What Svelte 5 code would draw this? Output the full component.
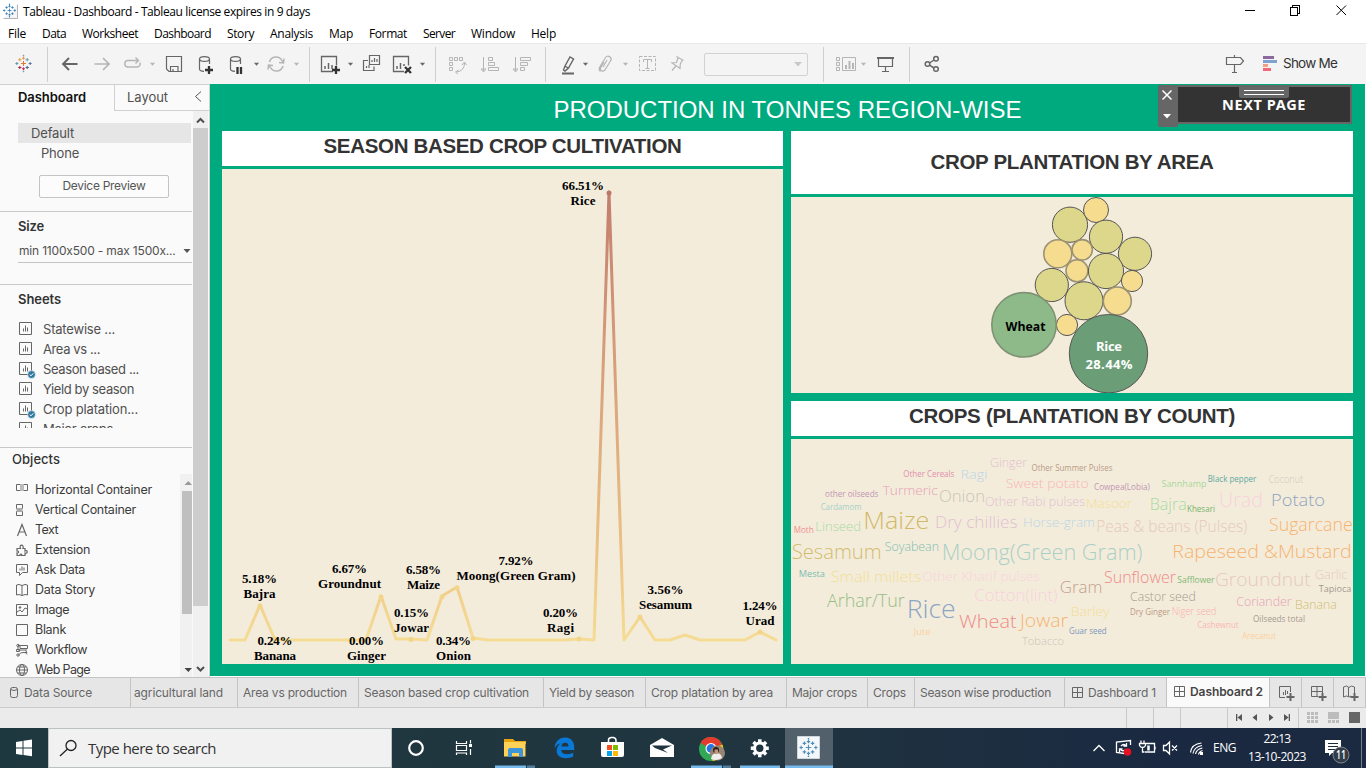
<script>
  // Spreads the letters of a label so that it fills the given width.
  function fit(node, width) {
    const natural = node.getBoundingClientRect().width;
    node.style.letterSpacing = (width - natural) / node.textContent.length + 'px';
    node.style.width = width + 'px';
  }

  const menus = [
    ['File', 18], ['Data', 24], ['Worksheet', 56], ['Dashboard', 57], ['Story', 27], ['Analysis', 43],
    ['Map', 24], ['Format', 38], ['Server', 32], ['Window', 44], ['Help', 25]
  ];
  const sheets = [
    ['Statewise ...', 72, false], ['Area vs ...', 57, false], ['Season based ...', 96, true],
    ['Yield by season', 91, false], ['Crop platation...', 95, true], ['Major crops', 70, false]
  ];
  const objects = [
    ['Horizontal Container', 117, 'h'], ['Vertical Container', 101, 'v'], ['Text', 23, 't'], ['Extension', 55, 'e'],
    ['Ask Data', 50, 'a'], ['Data Story', 60, 's'], ['Image', 34, 'i'], ['Blank', 31, 'b'], ['Workflow', 52, 'w'], ['Web Page', 55, 'g']
  ];
  const tabs = [
    ['agricultural land', 107, 89, 3], ['Area vs production', 121, 104, 5], ['Season based crop cultivation', 185, 165, 5],
    ['Yield by season', 102, 85, 5], ['Crop platation by area', 141, 122, 5], ['Major crops', 81, 65, 5],
    ['Crops', 47, 33, 5], ['Season wise production', 150, 131, 5]
  ];
  const bubbles = [
    [1070, 224.7, 17.6, 'm'], [1096, 210, 12.5, 's'], [1106, 236.7, 16.6, 'm'], [1135, 253.8, 16.6, 'm'],
    [1057.8, 253.8, 14, 's g'], [1082.2, 249.8, 10.2, 's g'], [1077, 270.8, 11, 's g'], [1106, 271, 17.6, 'm'],
    [1132, 281, 10.6, 's'], [1051.8, 285, 16.6, 'm'], [1084, 300.8, 19, 'm'], [1117.3, 301, 14, 's g'],
    [1067, 325, 10.6, 's'], [1024, 324.8, 32.2, 'l g'], [1108.5, 353.7, 39.2, 'x']
  ];
  const line = '230,640 245,640 260,605 275,640 366,640 381,596 396,639 411,639 427,640 442,596 457,587 473,638 488,640 564,640 579,639 594,640 609,192 624,640 640,617 655,640 670,640 685,635 700,640 745,640 760,632 776,640';
  const points = [
    ['5.18%', 'Bajra', 259.5, 583, 35, 32], ['0.24%', 'Banana', 275, 645, 35, 42], ['6.67%', 'Groundnut', 349.5, 573, 35, 63],
    ['0.00%', 'Ginger', 366.5, 645, 35, 39], ['6.58%', 'Maize', 423.5, 574, 35, 33], ['0.15%', 'Jowar', 411.5, 617, 35, 35],
    ['0.34%', 'Onion', 453.5, 645, 35, 35], ['7.92%', 'Moong(Green Gram)', 516, 565, 35, 119], ['0.20%', 'Ragi', 560.5, 617, 35, 27],
    ['66.51%', 'Rice', 583, 190, 42, 25], ['3.56%', 'Sesamum', 665.5, 594, 36, 53], ['1.24%', 'Urad', 760, 610, 35, 29]
  ];
  const words = [
    ['Ginger', 990, 467, 37, 12, '#dfbfd2'], ['Other Summer Pulses', 1031.5, 471, 81, 8.5, '#b99a85'],
    ['Other Cereals', 903.3, 477, 51, 8.5, '#e08fac'], ['Ragi', 960.5, 479, 27, 13, '#b9d6e6'],
    ['Sweet potato', 1005.7, 488, 83, 13, '#f8b6b4'], ['Cowpea(Lobia)', 1094, 490, 56, 8.5, '#c295b4'],
    ['Sannhamp', 1161.5, 487, 45, 9.5, '#a5d99b'], ['Black pepper', 1207.7, 482, 48.7, 8.5, '#62aaa3'],
    ['Coconut', 1268.7, 483, 34.5, 10, '#cfc7bc'], ['other oilseeds', 825, 497, 53.5, 8.5, '#c295b4'],
    ['Turmeric', 882.7, 495, 55, 13, '#e4a0b6'], ['Onion', 939, 502, 46, 17, '#cbc3b8'],
    ['Other Rabi pulses', 985, 506, 100, 12.5, '#dfbfd2'], ['Masoor', 1086, 508, 46, 13, '#f2dd93'],
    ['Bajra', 1149.7, 510, 37, 16, '#a7dba0'], ['Khesari', 1187, 512, 28, 8.5, '#78b36d'],
    ['Urad', 1219, 507, 44, 20, '#f8d2db'], ['Potato', 1271, 506, 54, 17, '#8ea4bf'],
    ['Cardamom', 820.7, 510, 40.7, 8.5, '#a5d0c9'], ['Maize', 863.3, 529, 66, 24, '#d0b968'],
    ['Moth', 793.7, 533, 20, 8.5, '#ee9090'], ['Linseed', 815.3, 531, 45.7, 12.5, '#a7dba0'],
    ['Dry chillies', 935, 528, 82.5, 16, '#dfbfd2'], ['Horse-gram', 1023, 527, 72, 13, '#b9d6e6'],
    ['Peas & beans (Pulses)', 1096.3, 532, 151, 15.5, '#e5c9bc'], ['Sugarcane', 1269, 531, 83.7, 17.5, '#f6b36f'],
    ['Sesamum', 791.7, 559, 90, 19.5, '#d0bc70'], ['Soyabean', 884.7, 551, 54.3, 12, '#7dbcb0'],
    ['Moong(Green Gram)', 941.7, 560, 200.7, 22, '#a9d0c5'], ['Rapeseed &Mustard', 1172.3, 558, 179.3, 19, '#f6b36f'],
    ['Mesta', 798.7, 577, 26.3, 9.5, '#7dbcb0'], ['Small millets', 830.7, 582, 90.7, 15, '#f2dd93'],
    ['Other Kharif pulses', 922.3, 581, 117.3, 13, '#f8d2db'], ['Gram', 1059.7, 593, 42.7, 17, '#c2a08c'],
    ['Sunflower', 1104, 583, 72, 16, '#ee8a88'], ['Safflower', 1177.3, 583, 37.3, 8.5, '#7fb874'],
    ['Groundnut', 1215, 586, 95.7, 19, '#e5c9bc'], ['Garlic', 1315, 579, 32.3, 12, '#e5c9bc'],
    ['Tapioca', 1318.7, 592, 32.7, 9.5, '#a49a90'], ['Arhar/Tur', 827, 607, 77.7, 17.5, '#96bd85'],
    ['Rice', 906.7, 618, 49, 25, '#8ba5c5'], ['Cotton(lint)', 974.3, 601, 83.3, 16, '#f8d2db'],
    ['Castor seed', 1130, 601, 65.7, 12.5, '#a49a90'], ['Wheat', 959, 627.5, 57.7, 19, '#ee8a88'],
    ['Jowar', 1020, 627, 48, 17.5, '#f6b36f'], ['Barley', 1070.7, 616, 38.7, 13, '#f2dd93'],
    ['Dry Ginger', 1130, 615, 40, 8.5, '#b99a85'], ['Niger seed', 1171.7, 615, 44.7, 10, '#f8aea9'],
    ['Coriander', 1236.3, 606, 55.3, 12.5, '#e4a0b6'], ['Banana', 1295, 609, 41.7, 12.5, '#d0bc70'],
    ['Oilseeds total', 1253, 622, 52, 8.5, '#a49a90'], ['Cashewnut', 1197.3, 628, 41.3, 8.5, '#f8b6b4'],
    ['Arecanut', 1242, 638.5, 34, 8.5, '#fbd0a0'], ['Guar seed', 1069, 634, 37.7, 8.5, '#7b97bb'],
    ['Tobacco', 1022, 645, 42, 11, '#cbc3b8'], ['Jute', 913.7, 635, 16.7, 8.5, '#fbd0a0']
  ];
  // Logo crosses: x, y, arm length, colour
  const crosses = [
    [0, 0, 2.6, '#e8762d'], [0, -5.6, 1.6, '#eb9a4e'], [0, 5.6, 1.6, '#c8334a'], [-7, 0, 1.6, '#5f9aa8'], [7, 0, 1.6, '#59789a'],
    [-3.9, -4, 1.7, '#e8a04e'], [3.9, -4, 1.7, '#6aa1ae'], [-3.9, 4.2, 1.7, '#b02a45'], [3.9, 4.2, 1.7, '#47629c'],
    [0, -8.300, .8, '#8a9bb5'], [0, 8.300, .8, '#8a9bb5']
  ];
</script>

{#snippet logo(cx, cy, s, mono)}
  <g transform="translate({cx} {cy}) scale({s})">
    {#each crosses as c}
      <path d="M{c[0] - c[2]} {c[1]}h{c[2] * 2}M{c[0]} {c[1] - c[2]}v{c[2] * 2}" style:stroke={mono || c[3]} stroke-width="1.1" />
    {/each}
  </g>
{/snippet}

{#snippet arrow(x, y)}
  <path class="solid" d="M{x - 2.6} {y - 1.3}h5.2l-2.6 3z" />
{/snippet}

<div class="app">
  <header class="titlebar">
    <svg width="23" height="23" viewBox="0 0 23 23"><path d="M3.5 18.5h14v-14" stroke="#b5b5b5" fill="#f5f5f5" />{@render logo(9.5, 10.5, 0.75, '#357fb5')}</svg>
    <span class="apptitle" use:fit={287}>Tableau - Dashboard - Tableau license expires in 9 days</span>
    <svg class="winbtns" width="136" height="23" viewBox="1230 0 136 23" shape-rendering="crispEdges" stroke="#000">
      <path d="M1245 10.5h10M1290.5 7.5h7v8h-7zM1292.5 7v-2h7v8h-2" />
      <path shape-rendering="auto" d="M1336.500 5.500l9.500 9.500M1346 5.500l-9.500 9.500" />
    </svg>
  </header>
  <nav class="menu">
    {#each menus as m}<span use:fit={m[1]}>{m[0]}</span>{/each}
  </nav>

  <div class="toolbar">
    <svg width="47" height="40" viewBox="0 44 47 40">{@render logo(23.5, 63.5, 0.95, null)}</svg>
    <i></i>
    <svg width="261" height="40" viewBox="48 44 261 40">
      <path stroke-width="1.9" d="M77.500 64H63.500M69 58l-6 6 6 6" />
      <g class="dim">
        <path stroke-width="1.7" d="M94.500 64h14M103 58l6 6-6 6" />
        <path stroke-width="1.400" d="M132 60.500h-4.500a3.300 3.300 0 0 0 0 6.500h9.500a3.300 3.300 0 0 0 3-4.500M132 60.500h6M135.500 57.500l3 3-3 3" />
        {@render arrow(152.500, 64)}
        <path stroke-width="1.500" d="M269.500 62a6.800 6.800 0 0 1 12.500-1.500l1.500 2M283 66a6.800 6.800 0 0 1-12.500 1.500l-1.500-2M284 58.500l-.5 4.500-4.500-.5M268 69.500l.5-4.500 4.500.5" />
        {@render arrow(296.500, 64)}
      </g>
      <path stroke-width="1.200" d="M166.500 56.500h15v15h-12.500l-2.500-2.500zM170.500 71v-4.500h7.500v4.500M173 69v2" />
      <ellipse stroke-width="1.200" cx="204.500" cy="59" rx="5" ry="2.400" />
      <path stroke-width="1.200" d="M199.500 59v10c0 1.300 2 2.200 4.500 2.400M209.500 59v5" /><path class="bold" d="M209 66v8M205 70h8" />
      <ellipse stroke-width="1.200" cx="235.500" cy="59" rx="5" ry="2.400" />
      <path stroke-width="1.200" d="M230.500 59v10c0 1.300 2 2.200 4.500 2.400M240.500 59v5" /><path class="bold" d="M237.500 67v7M241 67v7" />
      {@render arrow(256.500, 64)}
    </svg>
    <i></i>
    <svg width="125" height="40" viewBox="310 44 125 40">
      <path stroke-width="1.300" d="M333 71.500h-11.500v-15h15v9" /><path stroke-width="1.500" d="M325 69v-3M328.500 69v-6M332 69v-4" />
      <path class="bold" d="M336 66v8M332 70h8" />{@render arrow(350.500, 64)}
      <path stroke-width="1.200" d="M369.500 60.500v-5h10v9h-10zM368 60.500h-4.500v10h10.500v-4M366.500 68v-2M369 68v-3M372 62v-2M374.500 62v-4M377 62v-3" />
      <path stroke-width="1.300" d="M404 71.500h-10.500v-15h15v9" /><path stroke-width="1.500" d="M397 69v-3M400.500 69v-6M404 66v-2" />
      <path class="bold" d="M405 67l6 6M411 67l-6 6" />{@render arrow(422.500, 64)}
    </svg>
    <i></i>
    <svg width="109" height="40" viewBox="436 44 109 40" class="dim">
      <path d="M449.500 57.500h3v3h-3zM454.500 57.500h3v3h-3zM459.500 57.500h3v3h-3zM449.500 62.500h3v3h-3zM449.500 67.500h3v3h-3zM464.500 63q0 8-8 9M462 65l2.500-3 2 3M458.500 70l-3 2 2.500 2" />
      <path d="M483.500 57v14M481 69l2.500 3 2.500-3zM488.500 57.500h4v3h-4zM488.500 62.500h6v3h-6zM488.500 67.500h10v3h-10z" />
      <path d="M515.500 57v14M513 69l2.500 3 2.500-3zM520.500 57.500h10v3h-10zM520.500 62.500h7v3h-7zM520.500 67.500h4v3h-4z" />
    </svg>
    <i></i>
    <svg width="158" height="40" viewBox="546 44 158 40">
      <path d="M562 73.500h12" stroke-width="2" /><path stroke-width="1.400" d="M563.500 70l1.500-4 5-9 3.500 2-5 9-3.500 3zM565 66l3 2" />{@render arrow(585.500, 64)}
      <g class="dim">
        <path stroke-width="1.200" d="M604 62l-3.500 6a2.500 2.500 0 0 0 4 2.500l6-9.500a3 3 0 0 0-5-3.500l-6 10a3.500 3.500 0 0 0 1 4M607 60l-4 7" />{@render arrow(625.500, 64)}
        <path stroke-dasharray="3 1.500" d="M639.500 56.500h16v14h-16z" /><path d="M643.500 62v-2.500h8v2.500M647.500 60v8.500M645.500 68.500h4" />
        <path stroke-width="1.200" d="M676.500 56.500l7 4M678 57.500l-1.500 5-4.500.500 8 5.500.3-4.500 2.200-4M675.800 66l-3.800 4.500" />
      </g>
    </svg>
    <div class="combo"><svg width="10" height="8"><path d="M1 2h8l-4 4.500z" fill="#c8c8c8" /></svg></div>
    <span class="gap"></span>
    <i></i>
    <svg width="85" height="40" viewBox="824 44 85 40">
      <g class="dim"><path d="M836.500 57.500h3v3h-3zM836.500 62.500h3v3h-3zM836.500 67.500h3v3h-3zM842.500 57.500h13v13h-13z" /><path stroke-width="2" d="M846 69v-4M849.500 69v-8M853 69v-6" />{@render arrow(863.500, 64)}</g>
      <path stroke-width="2" d="M877 58h17" /><path stroke-width="1.200" d="M878.500 59v7.500h14v-7.500M885.500 66v5.500M882 71.500h7" />
    </svg>
    <i></i>
    <svg width="40" height="40" viewBox="910 44 40 40" stroke-width="1.500"><path d="M929.500 63l4.500-3M929.500 65.200l4.500 2.800" /><circle cx="927.500" cy="64" r="2.300" /><circle cx="936" cy="58.700" r="2.300" /><circle cx="936" cy="69" r="2.300" /></svg>
    <svg class="right" width="62" height="40" viewBox="1221 44 62 40">
      <path stroke-width="1.200" d="M1226.500 57.500h14l3 3.500-3 3.500h-14zM1234.500 55v2M1234.500 65v7M1232 72.500h5" />
      <g stroke="none"><path fill="#8b6a9b" d="M1263 56h11v3h-11z" /><path fill="#7ea3d0" d="M1263 60h14v3h-14z" /><path fill="#f0a083" d="M1263 64h5v3h-5z" /><path fill="#f2687a" d="M1263 68h8v3h-8z" /></g>
    </svg>
    <span class="showme" use:fit={54}>Show Me</span>
  </div>

  <main>
    <aside>
      <div class="sidetabs">
        <div class="on"><b use:fit={68}>Dashboard</b></div>
        <div class="off"><span use:fit={41}>Layout</span><svg width="10" height="14"><path d="M8 1.500L2.500 6.500 8 11.500" stroke="#555" /></svg></div>
      </div>
      <div class="sidebody">
        <div class="content">
          <section class="devices">
            <div class="row sel"><span use:fit={43}>Default</span></div>
            <div class="row"><span use:fit={38}>Phone</span></div>
            <button><span use:fit={83}>Device Preview</span></button>
          </section>
          <section class="size">
            <h4><span use:fit={26}>Size</span></h4>
            <div class="select"><span use:fit={158}>min 1100x500 - max 1500x...</span><svg width="8" height="6"><path d="M.5 1h7l-3.500 4z" fill="#555" /></svg></div>
          </section>
          <section class="sheets">
            <h4><span use:fit={43}>Sheets</span></h4>
            <ul>
              {#each sheets as s}
                <li>
                  <svg width="18" height="20"><path d="M1.500 3.500h12v12h-12z" /><path d="M5.500 12.500v-3M7.500 12.500v-6M9.500 12.500v-4" />
                    {#if s[2]}<circle cx="13.500" cy="15.500" r="3.900" fill="#3279a0" stroke="#fafafa" stroke-width=".6" /><path d="M11.700 15.500l1.300 1.300 2.300-2.500" stroke="#fff" />{/if}
                  </svg>
                  <span use:fit={s[1]}>{s[0]}</span>
                </li>
              {/each}
            </ul>
          </section>
          <section class="objects">
            <h5><span use:fit={48}>Objects</span></h5>
            <div class="objbody">
              <ul>
                {#each objects as o}
                  <li>
                    <svg width="14" height="20" viewBox="0 0 14 20">
                      {#if o[2] === 'h'}<path d="M.5 4.500h4v6h-4zM7.500 4.500h4v6h-4z" /><path d="M4.500 4.500h3v6h-3z" fill="#bbb" stroke="#bbb" />
                      {:else if o[2] === 'v'}<path d="M.5 4.500h6v4h-6zM.5 11.500h6v4h-6z" /><path d="M1 8.500h5v3h-5z" fill="#aaa" stroke="#aaa" />
                      {:else if o[2] === 't'}<path stroke-width="1.200" d="M1.500 16l4.500-11.500L10.500 16M3 12h6" />
                      {:else if o[2] === 'e'}<path stroke-width="1.200" d="M1 8.500h3.500C2.500 4 8.500 4 7 8.500h2V11c3-1.500 3 3 0 2v2.500H5.500c1-2-2-2-1.500 0H1V13c2 .5 2-2.500 0-2z" />
                      {:else if o[2] === 'a'}<path d="M.5 4.500h11v8h-5l-3 3v-3h-3z" /><path d="M4 10.500v-2M6 10.500v-4M8 10.500v-3" stroke="#888" stroke-width="1.300" />
                      {:else if o[2] === 's'}<path d="M.5 5l2.500-.5 3 1 3-1 2.500.5v10L9 14.500l-3 1-3-1-2.500.5zM6 5.500v10" />
                      {:else if o[2] === 'i'}<path d="M.5 4.500h11v11H.5zM1 12l3-2 2 2 3-4 2.500 1" /><circle cx="4" cy="7.500" r=".8" fill="#555" />
                      {:else if o[2] === 'b'}<path d="M.5 4.500h11v11H.5z" />
                      {:else if o[2] === 'w'}<path d="M2 5.500h2M4 5.500h7.500v3H4zM2 7v3h9M.5 9.500h3v2h-3zM8 12.500h3l-1.500-2M3 15.500q0-3 5-3M9 12l2 2.500" /><circle cx="2" cy="5.500" r="1.200" /><circle cx="2" cy="15" r="1.200" />
                      {:else}<circle cx="6" cy="10" r="5.500" /><ellipse cx="6" cy="10" rx="2.500" ry="5.500" /><path d="M.5 10h11M1.500 7h9M1.500 13h9" />{/if}
                    </svg>
                    <span use:fit={o[1]}>{o[0]}</span>
                  </li>
                {/each}
              </ul>
              <svg class="inner" width="12" height="204" viewBox="180 473 12 204"><path fill="#f1f1f1" d="M180 473h12v204h-12z" /><path fill="#bfbfbf" d="M182 490h10v123h-10z" /><path fill="#999" d="M184.500 484h7.500l-3.700-4z" /><path fill="#444" d="M184.500 667h7.500l-3.700 4z" /></svg>
            </div>
          </section>
        </div>
        <svg width="16" height="566" viewBox="193 111 16 566"><path fill="#f0f0f0" d="M193 111h15v566h-15z" /><path fill="#cdcdcd" d="M193 128h15v478h-15z" /><path stroke="#505050" stroke-width="2" d="M197 122.500l3.500-3.500 3.500 3.500M197 667l3.500 3.500 3.500-3.500" /></svg>
      </div>
    </aside>

    <div class="canvas">
      <h1><span use:fit={468}>PRODUCTION IN TONNES REGION-WISE</span></h1>
      <div class="board">
        <div class="col">
          <h2 class="h35 up"><span use:fit={358}>SEASON BASED CROP CULTIVATION</span></h2>
          <svg width="561" height="495" viewBox="222 169 561 495">
            <defs><linearGradient id="heat" gradientUnits="userSpaceOnUse" x1="0" y1="192" x2="0" y2="640"><stop offset="0" stop-color="#c37d6c" /><stop offset=".35" stop-color="#d59c7b" /><stop offset=".75" stop-color="#e8bd83" /><stop offset="1" stop-color="#f5dc94" /></linearGradient></defs>
            <polyline points={line} stroke="url(#heat)" stroke-width="3" stroke-linejoin="round" stroke-linecap="round" />
            {#each [[260, 606], [381, 597], [411, 639.500], [442, 597], [457, 588], [473, 638.500], [579, 639], [640, 617], [760, 632], [275, 639]] as p}<circle cx={p[0]} cy={p[1]} r="2.500" fill="#f2d588" />{/each}
            <circle cx="609" cy="193" r="2.500" fill="#bd7766" />
            <g class="marks">
              {#each points as p}
                <text x={p[2]} y={p[3]} textLength={p[4]}>{p[0]}</text>
                <text x={p[2]} y={p[3] + 15} textLength={p[5]}>{p[1]}</text>
              {/each}
            </g>
          </svg>
        </div>
        <div class="col">
          <h2 class="h63"><span use:fit={283}>CROP PLANTATION BY AREA</span></h2>
          <svg width="562" height="196" viewBox="791 197 562 196">
            {#each bubbles as b}<circle cx={b[0]} cy={b[1]} r={b[2]} class="bub {b[3]}" />{/each}
            <g class="names"><text x="1025.500" y="331" textLength="40" lengthAdjust="spacingAndGlyphs" fill="#000">Wheat</text><text x="1109" y="351" textLength="26" fill="#fff">Rice</text><text x="1109" y="369" textLength="47" fill="#fff">28.44%</text></g>
          </svg>
          <h2 class="h35 up second"><span use:fit={326}>CROPS (PLANTATION BY COUNT)</span></h2>
          <svg width="562" height="225" viewBox="791 439 562 225" class="cloud">
            {#each words as w}<text x={w[1]} y={w[2]} textLength={w[3]} lengthAdjust="spacingAndGlyphs" font-size={w[4]} fill={w[5]} font-weight={w[4] < 10 ? 400 : 340}>{w[0]}</text>{/each}
          </svg>
        </div>
      </div>
      <div class="next">
        <svg width="20" height="42" viewBox="1158 85 20 42"><path d="M1162.500 90.500l9 9M1171.500 90.500l-9 9" stroke="#fff" stroke-width="1.500" /><path d="M1163 114h8l-4 4.500z" fill="#fff" /></svg>
        <div class="nextbtn"><span use:fit={84}>NEXT PAGE</span><svg width="50" height="11"><path fill="#666" d="M0 0h50v9q0 2-2 2H2q-2 0-2-2z" /><path d="M5 3.500h40M5 7.500h40" stroke="#fff" /></svg></div>
      </div>
    </div>
  </main>

  <div class="tabs">
    <div class="tab" style:width="131px"><svg width="12" height="14" style:margin="0 4px 0 8px"><rect x="2.500" y="1.500" width="7" height="10" rx="2" /><path d="M2.500 3.500q3.500 2 7 0" /></svg><span use:fit={68}>Data Source</span></div>
    {#each tabs as t}<div class="tab" style:width="{t[1]}px" style:padding-left="{t[3]}px"><span use:fit={t[2]}>{t[0]}</span></div>{/each}
    <div class="tab" style:width="102px"><svg class="grid" width="12" height="12"><path d="M.5.5h10v10H.500zM5.500 0v11M0 5.500h11" /></svg><span use:fit={68}>Dashboard 1</span></div>
    <div class="tab active" style:width="103px"><svg class="grid" width="12" height="12"><path d="M.5.5h10v10H.500zM5.500 0v11M0 5.500h11" /></svg><b use:fit={73}>Dashboard 2</b></div>
    <div class="tab add"><svg width="20" height="18"><path d="M8 13.500H2.500v-11h11V8M6.500 11V8M8.500 11V6M10.500 10V7" /><path stroke-width="2" d="M13.500 9v8M9.500 13h8" /></svg></div>
    <div class="tab add"><svg width="20" height="18"><path d="M9 12.500H2.500v-10h11V9M8 2.500v10M2.500 7.500h11" /><path stroke-width="2" d="M13.500 9v8M9.500 13h8" /></svg></div>
    <div class="tab add"><svg width="20" height="18"><path d="M10 12l-2 1-2.500-1-3 1v-10l3-1 2.500 1.500 2.500-1.500 3 1v6M7.500 3.500v9" /><path stroke-width="2" d="M13.500 9v8M9.500 13h8" /></svg></div>
  </div>

  <div class="status">
    <svg width="367" height="20" viewBox="999 708 367 20">
      <path stroke="#c9c9c9" d="M1126.500 708v20M1153.500 708v20M1180.500 708v20M1227.500 708v20M1298.500 708v20" />
      <g fill="#555"><path d="M1236 714h1.300v7h-1.300zM1242 714v7l-4.500-3.500zM1257 714v7l-4.500-3.500zM1269 714v7l4.500-3.500zM1284 714v7l4.500-3.500zM1288.700 714h1.300v7h-1.300z" /></g>
      <path fill="#bcbcbc" d="M1307 712h3v3h-3zM1311 712h3v3h-3zM1315 712h3v3h-3zM1307 716h3v3h-3zM1311 716h3v3h-3zM1315 716h3v3h-3zM1307 720h3v3h-3zM1311 720h3v3h-3zM1315 720h3v3h-3zM1328 712h11v7h-11zM1328 720h3v3h-3zM1332 720h3v3h-3zM1336 720h3v3h-3z" />
      <path fill="#666" d="M1349 712h11v11h-11z" />
    </svg>
  </div>

  <footer>
    <svg width="48" height="40" viewBox="0 728 48 40"><path fill="#fff" d="M16 742l6.500-1v6.500H16zM23.500 740.800l8.500-1.200v7.900h-8.500zM16 748.500h6.500v6.500l-6.500-1zM23.500 748.500h8.500v7.800l-8.500-1.200z" /></svg>
    <div class="search"><svg width="39" height="38" viewBox="49 729 39 38"><circle cx="71" cy="745.500" r="5" stroke="#222" stroke-width="1.300" /><path d="M67.500 749l-7.500 7" stroke="#222" stroke-width="1.300" /></svg><span use:fit={128}>Type here to search</span></div>
    <svg width="450" height="40" viewBox="392 728 450 40">
      <circle cx="416" cy="748" r="6.800" stroke="#fff" stroke-width="2.200" />
      <path stroke="#fff" stroke-width="1.200" d="M456.500 741v2.500h10V741M456.500 755v-2h10v2M456.500 745.500h10v5h-10zM470.500 740v3.500M470.500 749v6" /><path fill="#fff" d="M469 744h3v3h-3z" />
      <path fill="#e8a511" d="M504 739h9l2 2h11v3h-22z" /><path fill="#ffd257" d="M504 742h21.500v14.500H504z" /><path fill="#3c96d8" d="M508 757v-7q0-2 2-2h11q2 0 2 2v7h-4v-4h-7v4z" />
      <path fill="#0a78d6" d="M554.500 748c.5-6 4.500-10.500 10.500-10.500 6.500 0 9.200 5 9.200 9.500v3h-13c.5 3.500 3.500 4.300 6 4.300 2.500 0 4.500-.8 6-1.700v4c-2 1.200-4.500 1.700-7 1.700-7 0-10-4-9.500-8.500.3-3 2-5.300 4.500-6.500-3 .5-5 2.200-6.700 4.700zM561.500 746.500h7c0-2-.8-3.700-3.400-3.700-2.200 0-3.300 1.700-3.600 3.700z" />
      <path stroke="#fff" stroke-width="1.500" d="M608.500 743v-3q0-2 2.500-2.500h2.500q2.500.5 2.500 3v2.500" /><path fill="#fff" d="M601 742h23v13q0 2-2 2h-19q-2 0-2-2z" /><path fill="#f25022" d="M607 745h5v5h-5z" /><path fill="#7fba00" d="M613 745h5v5h-5z" /><path fill="#00a4ef" d="M607 751h5v5h-5z" /><path fill="#ffb900" d="M613 751h5v5h-5z" />
      <path fill="#fff" d="M650 745l12-7 12 7v12h-24z" /><path fill="#203440" d="M652 745.500h20l-9 4 5 3.500-13-5z" />
      <circle cx="711" cy="749" r="12" fill="#31a853" /><path fill="#e33b2e" d="M711 749L700.500 743a12 12 0 0 1 21.500 1.500z" /><path fill="#fbc116" d="M711 749l11.500-4.500a12 12 0 0 1-10 16.500z" /><circle cx="711" cy="748.500" r="5.500" fill="#fff" /><circle cx="711" cy="748.500" r="4.400" fill="#2676e5" />
      <circle cx="717.500" cy="753" r="7.500" fill="#978573" /><circle cx="716" cy="750" r="3" fill="#2b211e" /><path fill="#c89476" d="M714.500 749.500h3.500v4h-3.500z" /><path fill="#f1eeee" d="M711 759q1-6 5-5 5-2 6 4-5 3.500-11 1z" />
      <g transform="translate(759.800 748.300)"><circle r="5.200" stroke="#fff" stroke-width="3" /><path stroke="#fff" stroke-width="3.500" d="M0-9v3M0 6v3M-9 0h3M6 0h3M-6.300-6.300l2 2M6.300 6.300l-2-2M6.300-6.300l-2 2M-6.300 6.300l2-2" /></g>
      <path fill="#52606c" d="M785 728h48v40h-48z" /><path fill="#f5f8fa" stroke="#cdd6db" d="M797.500 736.500h22v22h-22z" />{@render logo(808.5, 747.5, 1.05, '#4f8fb9')}
      <path fill="#76b9ed" d="M495 765.500h31v2.500h-31zM691 765.500h31v2.500h-31zM740 765.500h40v2.500h-40zM785 765.500h48v2.500h-48z" /><path fill="#527f9f" d="M527 765.500h8v2.500h-8zM723 765.500h8v2.500h-8z" />
    </svg>
    <svg class="right" width="122" height="40" viewBox="1086 728 122 40" stroke="#fff" stroke-width="1.300">
      <path d="M1093.500 751l5.500-5.500 5.500 5.500" /><path d="M1130.500 745v-4.500l-14 1.500v10.500l8 1" /><path d="M1121 746q3-3 5 0M1126.500 743v3h-3M1125 750q-3 2-5-1M1119.500 752v-3h3" /><circle cx="1127.500" cy="752" r="3.700" fill="#e81123" stroke="none" />
      <path d="M1146 743.500h8.500v8.500h-9.500M1155 746.500v3M1141 740.500v3M1144 740.500v3M1139.500 743.500h6v2q-1 2-3 2t-3-2zM1142.500 748v4h2" /><path stroke-width="2.500" d="M1148.500 745.500v5" />
      <path d="M1163.500 745.500h2.500l3.500-3.500v12l-3.500-3.500h-2.500zM1172 745.500l5 5M1177 745.500l-5 5" />
      <path stroke-width="1.200" d="M1190.500 752.500q1-8.500 11-9.500M1193 753.500q1-6.500 9-8M1195.500 754q1-5 7-6M1198.500 754.500q.5-3 4-4" /><path fill="#fff" stroke="none" d="M1200 752h3v3h-3z" />
    </svg>
    <span class="lang" use:fit={23}>ENG</span>
    <div class="clock"><span use:fit={27}>22:13</span><span use:fit={58}>13-10-2023</span></div>
    <svg width="48" height="40" viewBox="1318 728 48 40"><path fill="#fff" d="M1325 740h16v13h-9l-3 3v-3h-4z" /><path stroke="#1d2d3f" d="M1328 743.500h10M1328 746.500h10M1328 749.500h7" /><circle cx="1341" cy="755" r="8" fill="#333c48" stroke="#7d868e" /><text x="1336" y="759" font-size="12" font-weight="600" fill="#fff" textLength="10" lengthAdjust="spacingAndGlyphs">11</text><path stroke="#77808a" d="M1361.500 728v40" /></svg>
  </footer>
</div>

<style>
  :global(body) { margin: 0; overflow: hidden; }
  .app { width: 1366px; height: 768px; display: flex; flex-direction: column; background: #fff; font: 13px/1 Inter, sans-serif; color: #505050; overflow: hidden; }
  .app :global(*) { box-sizing: border-box; }
  svg { display: block; flex: none; fill: none; overflow: hidden; }
  span, b { display: inline-block; white-space: nowrap; flex: none; }
  h1, h2, h4, h5, ul { margin: 0; padding: 0; list-style: none; }
  .titlebar, .menu { display: flex; align-items: center; font-family: "Open Sans", sans-serif; font-size: 12px; color: #000; }
  .titlebar { height: 23px; }
  .winbtns, .right { margin-left: auto; }
  .menu { height: 20px; gap: 16px; padding: 2px 0 0 8px; }
  .toolbar { height: 41px; border-top: 1px solid #e8e8e8; background: #f4f4f4; display: flex; align-items: center; }
  .toolbar svg { stroke: #666; }
  .toolbar i { width: 1px; height: 35px; background: #cfcfcf; flex: none; }
  .toolbar .dim, .toolbar .dim path { stroke: #b5b5b5; }
  .bold { stroke: #333; stroke-width: 2.3; }
  .toolbar .solid { fill: #666; stroke: none; }
  .toolbar .dim .solid { fill: #b5b5b5; stroke: none; }
  .combo { width: 104px; height: 23px; border: 1px solid #d2d2d2; border-radius: 2px; display: flex; align-items: center; justify-content: flex-end; padding-right: 4px; flex: none; }
  .combo svg { stroke: none; }
  .gap { width: 15px; }
  .showme { margin-right: 29px; color: #333; font-size: 13.5px; }
  main { height: 593px; display: flex; flex: none; }
  aside { width: 210px; border-top: 1px solid #d0d0d0; border-right: 1px solid #d0d0d0; background: #fafafa; display: flex; flex-direction: column; overflow: hidden; }
  .sidetabs { height: 26px; display: flex; flex: none; }
  .on { width: 114px; padding: 6px 0 0 18px; color: #111; }
  .off { flex: 1; border-left: 1px solid #d0d0d0; border-bottom: 1px solid #d0d0d0; display: flex; align-items: center; justify-content: space-between; padding: 0 6px 1px 12px; }
  b, h4 { font-weight: 600; }
  .sidebody { display: flex; flex: 1; min-height: 0; }
  .content { width: 193px; flex: none; padding-right: 1px; }
  section { border-bottom: 1px solid #c9c9c9; }
  .devices { height: 101px; padding: 12px 0 0 18px; }
  .row { height: 20px; margin-right: 1px; padding: 4px 0 0 23px; }
  .row.sel { background: #e6e6e6; padding-left: 13px; }
  button { display: flex; align-items: center; justify-content: center; width: 130px; height: 23px; margin: 12px 0 0 21px; padding: 0 0 2px; border: 1px solid #c4c4c4; border-radius: 2px; background: #fcfcfc; font: 12px/1 Inter, sans-serif; color: #555; }
  .size { height: 73px; padding: 7px 0 0 18px; }
  h4, h5 { font-size: 13px; color: #333; height: 14px; line-height: 14px; }
  .select { height: 23px; margin: 7px 0 0; padding-left: 1px; border-bottom: 1px solid #c4c4c4; display: flex; justify-content: space-between; align-items: center; font-size: 12px; }
  .select svg { margin-right: 1px; }
  .sheets { height: 163px; padding: 7px 0 0 18px; }
  .sheets ul { margin-top: 13px; height: 109px; overflow: hidden; }
  li { height: 20px; display: flex; align-items: center; }
  li svg { stroke: #666; margin-right: 7px; }
  .objects { padding: 4px 0 0 12px; border: 0; }
  h5 { font-weight: 500; }
  .objbody { display: flex; justify-content: space-between; margin-top: 8px; }
  .objbody ul { padding: 6px 0 0 4px; }
  .objbody li svg { margin-right: 5px; }
  .objbody li { font-size: 12.5px; color: #3c3c3c; }
  .canvas { position: relative; flex: 1; background: #00aa7f; margin-right: 1px; border-bottom: 1px solid #fff; padding: 0 12px; }
  h1 { height: 47px; padding-top: 4px; text-align: center; font: 400 24px/43px "Liberation Sans", sans-serif; color: #fff; }
  .board { display: grid; grid-template-columns: 561px 562px; gap: 8px; }
  .col { display: flex; flex-direction: column; }
  .col svg { background: #f4ecdb; }
  h2 { display: flex; justify-content: center; align-items: center; background: #fff; margin-bottom: 3px; font: bold 20.5px/1 "Liberation Sans", sans-serif; color: #333; flex: none; }
  .h35 { height: 35px; }
  .up { padding-bottom: 5px; }
  .h63 { height: 63px; }
  .second { margin-top: 8px; }
  .marks { font: bold 13px "Liberation Serif", serif; text-anchor: middle; fill: #000; }
  .names { font: bold 13px "Open Sans", sans-serif; text-anchor: middle; }
  .bub { stroke: #555; stroke-width: 1; }
  .bub.g { stroke: #9b9273; stroke-width: 1.600; }
  .bub.s { fill: #f5dc8f; }
  .bub.m { fill: #ddd78c; }
  .bub.l { fill: #8dba88; stroke: #7e9274; }
  .bub.x { fill: #6b9e77; }
  .cloud { font-family: "Open Sans", sans-serif; }
  .next { position: absolute; left: 948px; top: 1px; display: flex; align-items: flex-start; }
  .next > svg { background: #666; border-radius: 2px; }
  .nextbtn { position: relative; width: 174px; height: 39px; border: 2px solid #666; border-left: 0; background: #333; color: #fff; font: bold 14.5px/1 "Noto Sans", sans-serif; padding: 10px 0 0 44px; }
  .nextbtn svg { position: absolute; left: 61px; top: 0; }
  .tabs { height: 31px; display: flex; flex: none; border-top: 1px solid #c4c4c4; border-bottom: 1px solid #cacaca; background: #e6e6e6; font-size: 12px; color: #666; }
  .tab { display: flex; align-items: center; border-right: 1px solid #c4c4c4; flex: none; padding-top: 1px; }
  .tab svg { stroke: #666; }
  .grid { margin: 0 4px 0 7px; }
  .active { background: #fafafa; color: #444; padding-bottom: 3px; }
  .add { width: 32px; padding-left: 7px; }
  .status { height: 20px; background: #ebebeb; display: flex; justify-content: flex-end; flex: none; }
  footer { height: 40px; flex: none; display: flex; align-items: center; background: linear-gradient(90deg, #1e3840, #20353f 55%, #1a2941 85%, #1b2a40); color: #fff; font: 12px/1 "Open Sans", sans-serif; }
  .search { width: 344px; height: 40px; flex: none; background: #f1f1f1; border: 1px solid #bcc1c3; display: flex; align-items: center; color: #333; font-size: 15px; }
  .lang { margin-left: 5px; }
  .clock { width: 82px; display: flex; flex-direction: column; align-items: center; gap: 6px; }
</style>
